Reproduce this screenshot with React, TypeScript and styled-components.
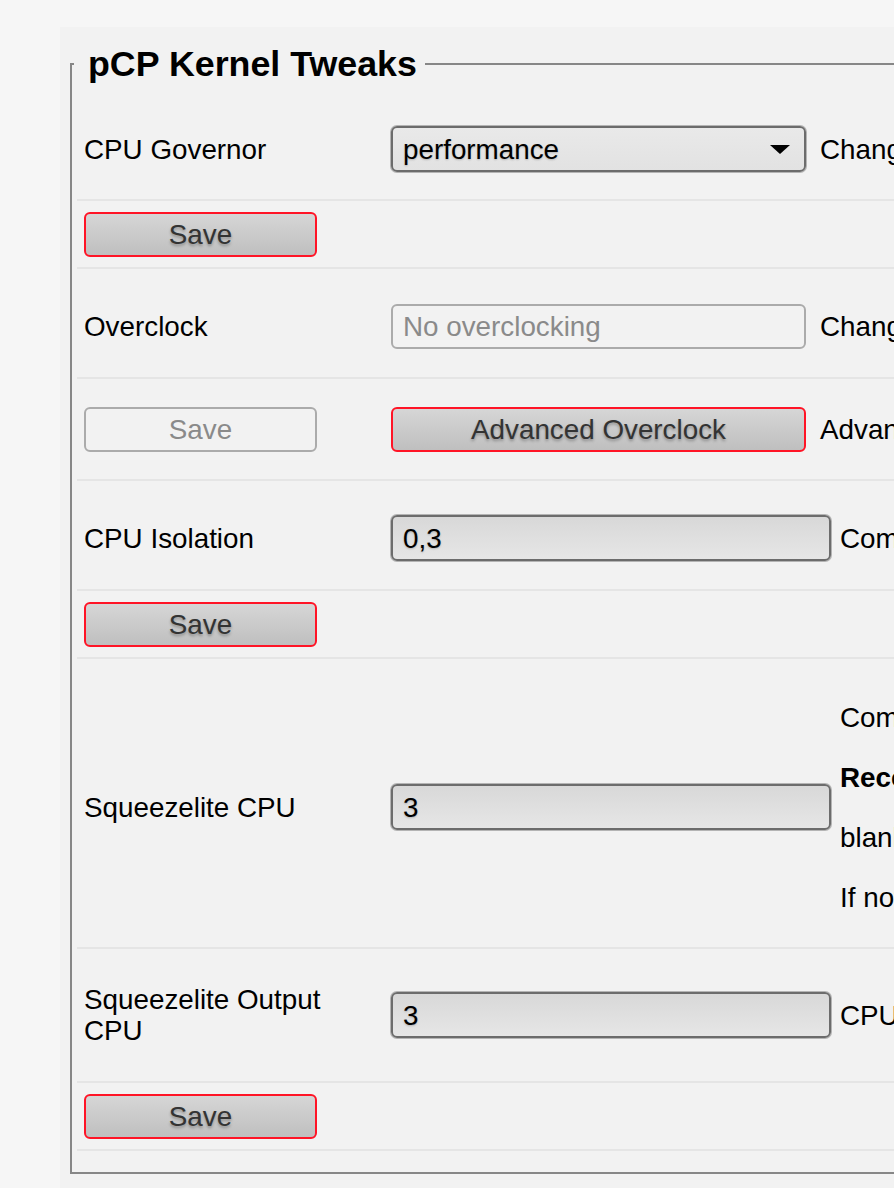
import React from "react";
import styled, { createGlobalStyle } from "styled-components";

const GlobalStyle = createGlobalStyle`
  html, body {
    margin: 0;
    padding: 0;
    background: #f6f6f6;
    overflow: hidden;
  }
  body {
    font-family: "Liberation Sans", Arial, sans-serif;
    color: #000;
  }
  #root { overflow: hidden; }
`;

const Page = styled.div`
  padding: 27px 0 0 60px;
  width: 1700px;
`;

const Panel = styled.div`
  background: #f2f2f2;
  padding: 17px 0 40px 10px;
`;

const Fieldset = styled.fieldset`
  margin: 0;
  border: 2px solid #878787;
  border-right: none;
  padding: 0 0 21px 5px;
  min-width: 0;
`;

const Legend = styled.legend`
  font-size: 35.8px;
  font-weight: bold;
  line-height: 40px;
  padding: 0 8px 0 14px;
  margin-left: -3px;
`;

const Table = styled.div`
  margin-top: 15px;
`;

const Row = styled.div<{ $h: number; $dy?: number; $input: number; $descGap: number }>`
  display: grid;
  grid-template-columns: 307px ${(p) => p.$input}px max-content;
  align-items: center;
  box-sizing: border-box;
  height: ${(p) => p.$h + 2}px;
  padding: ${(p) => p.$dy ?? 0}px 0 0 7px;
  border-bottom: 2px solid #e5e5e5;
  font-size: 27.8px;
  line-height: 31px;

  & > :nth-child(3) {
    padding-left: ${(p) => p.$descGap}px;
  }
`;

const Label = styled.div`
  padding-right: 8px;
`;

const Cell = styled.div`
  display: flex;
  align-items: center;
`;

const Desc = styled.div`
  display: flex;
  flex-direction: column;
  gap: 29px;
  white-space: nowrap;
`;

const Strong = styled.b`
  font-weight: bold;
`;

const SelectBox = styled.div`
  box-sizing: border-box;
  width: 100%;
  height: 46px;
  display: flex;
  align-items: center;
  justify-content: space-between;
  padding: 0 14px 0 10px;
  border: 2px solid #6c6c6c;
  border-radius: 6px;
  box-shadow: 0 0 0 1px #b4b4b4;
  background: linear-gradient(#e9e9e9, #e2e2e2);
  color: #000;
  text-shadow: 0 1px 2px rgba(0, 0, 0, 0.22);
`;

const TextBox = styled.div<{ $disabled?: boolean }>`
  box-sizing: border-box;
  width: 100%;
  height: ${(p) => (p.$disabled ? 45 : 46)}px;
  display: flex;
  align-items: center;
  padding: 0 10px;
  border-radius: 6px;
  ${(p) =>
    p.$disabled
      ? `
    border: 2px solid #ababab;
    background: #f2f2f2;
    color: #8a8a8a;
  `
      : `
    border: 2px solid #6c6c6c;
    box-shadow: 0 0 0 1px #b4b4b4;
    background: linear-gradient(#d8d8d8, #e6e6e6);
    color: #000;
    text-shadow: 0 1px 2px rgba(0, 0, 0, 0.22);
  `}
`;

const Button = styled.div<{ $disabled?: boolean; $w?: number }>`
  box-sizing: border-box;
  width: ${(p) => (p.$w ? `${p.$w}px` : "100%")};
  height: 45px;
  display: flex;
  align-items: center;
  justify-content: center;
  border-radius: 6px;
  ${(p) =>
    p.$disabled
      ? `
    border: 2px solid #ababab;
    background: #f2f2f2;
    color: #8a8a8a;
  `
      : `
    border: 2px solid #ff1426;
    background: linear-gradient(#d6d6d6, #bfbfbf);
    color: #333;
    text-shadow: 0 2px 3px rgba(0, 0, 0, 0.3);
  `}
`;

const Arrow = () => (
  <svg width="20" height="9" viewBox="0 0 20 9">
    <path d="M0 0 L20 0 L10 9 Z" fill="#000" />
  </svg>
);

export default function App() {
  return (
    <>
      <GlobalStyle />
      <Page>
        <Panel>
          <Fieldset>
            <Legend>pCP Kernel Tweaks</Legend>
            <Table>
              <Row $h={100} $input={415} $descGap={14}>
                <Label>CPU Governor</Label>
                <Cell>
                  <SelectBox>
                    <span>performance</span>
                    <Arrow />
                  </SelectBox>
                </Cell>
                <Desc>
                  <span>Change CPU Governor. Ondemand is the default governor.</span>
                </Desc>
              </Row>
              <Row $h={66} $input={415} $descGap={14}>
                <Cell>
                  <Button $w={233}>Save</Button>
                </Cell>
                <Cell />
                <Desc />
              </Row>
              <Row $h={108} $dy={6} $input={415} $descGap={14}>
                <Label>Overclock</Label>
                <Cell>
                  <TextBox $disabled>No overclocking</TextBox>
                </Cell>
                <Desc>
                  <span>Change Raspberry Pi overclocking.</span>
                </Desc>
              </Row>
              <Row $h={100} $input={415} $descGap={14}>
                <Cell>
                  <Button $disabled $w={233}>
                    Save
                  </Button>
                </Cell>
                <Cell>
                  <Button>Advanced Overclock</Button>
                </Cell>
                <Desc>
                  <span>Advanced overclocking options.</span>
                </Desc>
              </Row>
              <Row $h={108} $dy={6} $input={440} $descGap={9}>
                <Label>CPU Isolation</Label>
                <Cell>
                  <TextBox>0,3</TextBox>
                </Cell>
                <Desc>
                  <span>Comma separated list of CPUs to isolate from the kernel scheduler.</span>
                </Desc>
              </Row>
              <Row $h={66} $input={440} $descGap={9}>
                <Cell>
                  <Button $w={233}>Save</Button>
                </Cell>
                <Cell />
                <Desc />
              </Row>
              <Row $h={288} $dy={8} $input={440} $descGap={9}>
                <Label>Squeezelite CPU</Label>
                <Cell>
                  <TextBox>3</TextBox>
                </Cell>
                <Desc>
                  <span>Comma separated list of CPUs that Squeezelite will run on.</span>
                  <span>
                    <Strong>Recommended:</Strong> use the isolated CPUs from above.
                  </span>
                  <span>blank = Squeezelite runs on any CPU.</span>
                  <span>If not using CPU isolation, leave this field blank.</span>
                </Desc>
              </Row>
              <Row $h={132} $input={440} $descGap={9}>
                <Label>Squeezelite Output CPU</Label>
                <Cell>
                  <TextBox>3</TextBox>
                </Cell>
                <Desc>
                  <span>CPU for the Squeezelite output thread.</span>
                </Desc>
              </Row>
              <Row $h={66} $input={440} $descGap={9}>
                <Cell>
                  <Button $w={233}>Save</Button>
                </Cell>
                <Cell />
                <Desc />
              </Row>
            </Table>
          </Fieldset>
        </Panel>
      </Page>
    </>
  );
}
